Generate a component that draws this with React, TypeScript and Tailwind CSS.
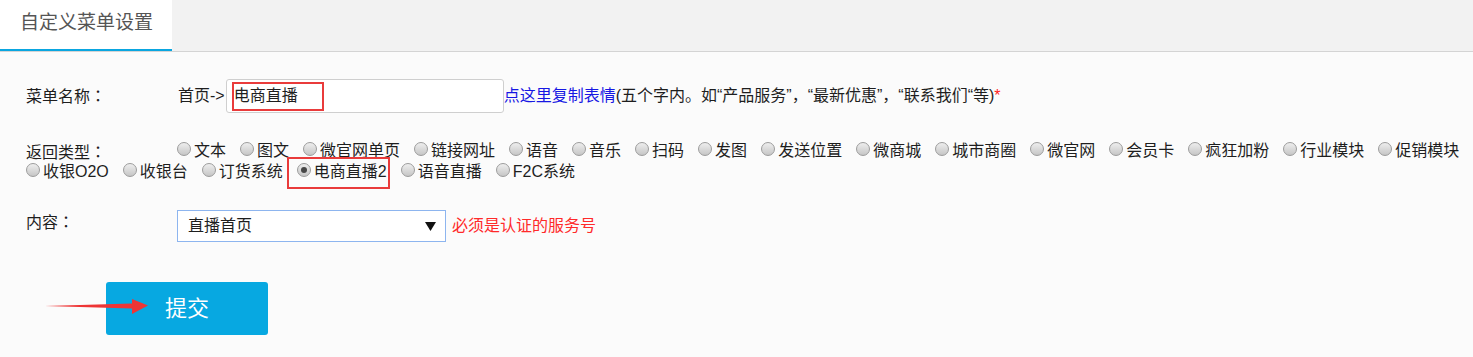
import React from 'react';

const types = [
    '文本', '图文', '微官网单页', '链接网址', '语音', '音乐', '扫码', '发图', '发送位置',
    '微商城', '城市商圈', '微官网', '会员卡', '疯狂加粉', '行业模块', '促销模块',
    '收银O2O', '收银台', '订货系统', '电商直播2', '语音直播', 'F2C系统',
];

function Radio({ checked }: { checked?: boolean }) {
    return (
        <span className="w-[14px] h-[14px] mb-[3px] shrink-0 rounded-full border border-[#9c9c9c] bg-linear-to-b from-[#eeeeee] to-[#c6c6c6] flex items-center justify-center">
            {checked && <span className="w-[6px] h-[6px] rounded-full bg-[#474747]" />}
        </span>
    );
}

// full-width colon, centred like the reference font
function Colon() {
    return <span className="font-['Noto_Sans_CJK_TC',sans-serif]">：</span>;
}

export default function App() {
    const selected = '电商直播2';

    return (
        <div className="min-h-[357px] bg-[#fbfbfb] text-[16px] text-[#1e1e1e] font-['Liberation_Sans','Noto_Sans_CJK_SC',sans-serif]">
            {/* Tab bar */}
            <div className="h-[52px] bg-[#f2f2f2] border-b border-[#d4d4d4] flex">
                <div className="w-[172px] h-[51px] bg-white border-b-2 border-[#0aa6e0] pl-[20px] text-[19px] leading-[46px] text-[#555]">
                    自定义菜单设置
                </div>
            </div>

            <div className="pl-[26px] pt-[27px]">
                {/* Menu name */}
                <div className="flex items-center h-[34px]">
                    <span className="w-[152px] shrink-0">菜单名称<Colon /></span>
                    <span>首页-&gt;</span>
                    <div className="relative w-[278px] h-[34px] ml-[1px] bg-white border border-[#cfcfcf] rounded-[3px] flex items-center pl-[7px]">
                        <span>电商直播</span>
                        <span className="absolute left-[5px] top-[2px] w-[92px] h-[29px] border-2 border-[#e93b3b]" />
                    </div>
                    <span className="text-[#1717e3]">点这里复制表情</span>
                    <span>(五个字内。如“产品服务”，“最新优惠”，“联系我们“等)</span>
                    <span className="text-[#ff1a1a]">*</span>
                </div>

                {/* Return type */}
                <div className="mt-[27px] flex flex-wrap gap-x-[14px] pr-[4px]">
                    <span className="w-[137px] h-[21px] leading-[23px]">返回类型<Colon /></span>
                    {types.map((t) => (
                        <label key={t} className="relative h-[21px] flex items-center gap-[3px] leading-[21px]">
                            <Radio checked={t === selected} />
                            <span>{t}</span>
                            {t === selected && (
                                <span className="absolute left-[-10px] right-[-3px] top-[-4px] bottom-[-7px] border-2 border-[#e93b3b]" />
                            )}
                        </label>
                    ))}
                </div>

                {/* Content */}
                <div className="mt-[28px] flex items-start">
                    <span className="w-[151px] shrink-0 leading-[23px]">内容<Colon /></span>
                    <div className="w-[269px] h-[32px] bg-white border border-[#8db5ef] flex items-center justify-between pl-[10px] pr-[9px]">
                        <span>直播首页</span>
                        <svg width="11" height="9" viewBox="0 0 11 9">
                            <path d="M0 0 H11 L5.5 9 Z" fill="#111" />
                        </svg>
                    </div>
                    <span className="ml-[6px] leading-[32px] text-[#ff2a2a]">必须是认证的服务号</span>
                </div>

                {/* Submit */}
                <div className="relative mt-[40px] pl-[80px] pb-[22px]">
                    <button className="w-[162px] h-[53px] rounded-[3px] bg-[#07a8e1] text-white text-[22px]">
                        提交
                    </button>
                    <svg className="absolute left-[19px] top-[17px]" width="105" height="16" viewBox="0 0 105 16">
                        <path d="M0 7 L87 4.5 L87 0 L103 6.5 L87 15 L87 9.5 Z" fill="#ee3535" />
                    </svg>
                </div>
            </div>
        </div>
    );
}
